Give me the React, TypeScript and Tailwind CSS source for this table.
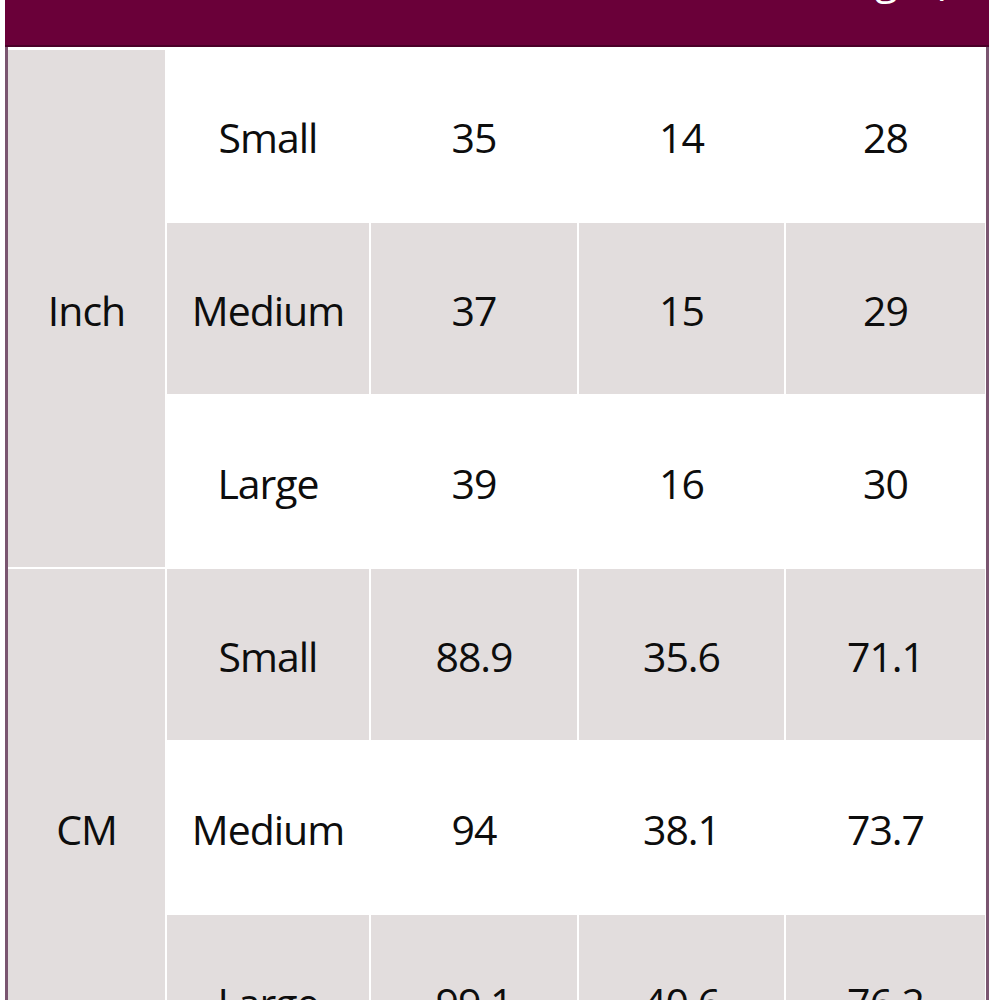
import React from "react";

const rows = [
  { size: "Small", vals: ["35", "14", "28"], grey: false },
  { size: "Medium", vals: ["37", "15", "29"], grey: true },
  { size: "Large", vals: ["39", "16", "30"], grey: false },
  { size: "Small", vals: ["88.9", "35.6", "71.1"], grey: true },
  { size: "Medium", vals: ["94", "38.1", "73.7"], grey: false },
  { size: "Large", vals: ["99.1", "40.6", "76.2"], grey: true },
];

export default function App() {
  return (
    <div
      className="w-[1000px] h-[1000px] overflow-hidden bg-white text-[#0d0d0d]"
      style={{ fontFamily: '"Open Sans", "Noto Sans", sans-serif' }}
    >
      <div className="ml-[5px] w-[984px]">
        <div className="h-[47px] bg-[#6a0039] border-b-2 border-[#4a0028] flex justify-end overflow-hidden">
          <span className="mr-[38px] -mt-[50px] text-[42px] leading-[56px] text-white">Length)</span>
        </div>
        <div className="border-x-[3px] border-[#7a5570] bg-white pt-[3px]">
          <div className="grid grid-cols-[157px_202px_206px_205px_199px] grid-rows-[repeat(6,171px)] gap-[2px] bg-white text-[41px] font-medium tracking-[-1px]">
            <div className="bg-[#e2dddd] flex items-center justify-center pt-[4px]" style={{ gridRow: "1 / span 3", gridColumn: 1 }}>
              Inch
            </div>
            <div className="bg-[#e2dddd] flex items-center justify-center pt-[4px]" style={{ gridRow: "4 / span 3", gridColumn: 1 }}>
              CM
            </div>
            {rows.map((r, i) => (
              <React.Fragment key={i}>
                <div
                  className={`${r.grey ? "bg-[#e2dddd]" : "bg-white"} flex items-center justify-center pt-[5px]`}
                  style={{ gridRow: i + 1, gridColumn: 2 }}
                >
                  {r.size}
                </div>
                {r.vals.map((v, j) => (
                  <div
                    key={j}
                    className={`${r.grey ? "bg-[#e2dddd]" : "bg-white"} flex items-center justify-center pt-[5px]`}
                    style={{ gridRow: i + 1, gridColumn: j + 3 }}
                  >
                    {v}
                  </div>
                ))}
              </React.Fragment>
            ))}
          </div>
        </div>
      </div>
    </div>
  );
}
